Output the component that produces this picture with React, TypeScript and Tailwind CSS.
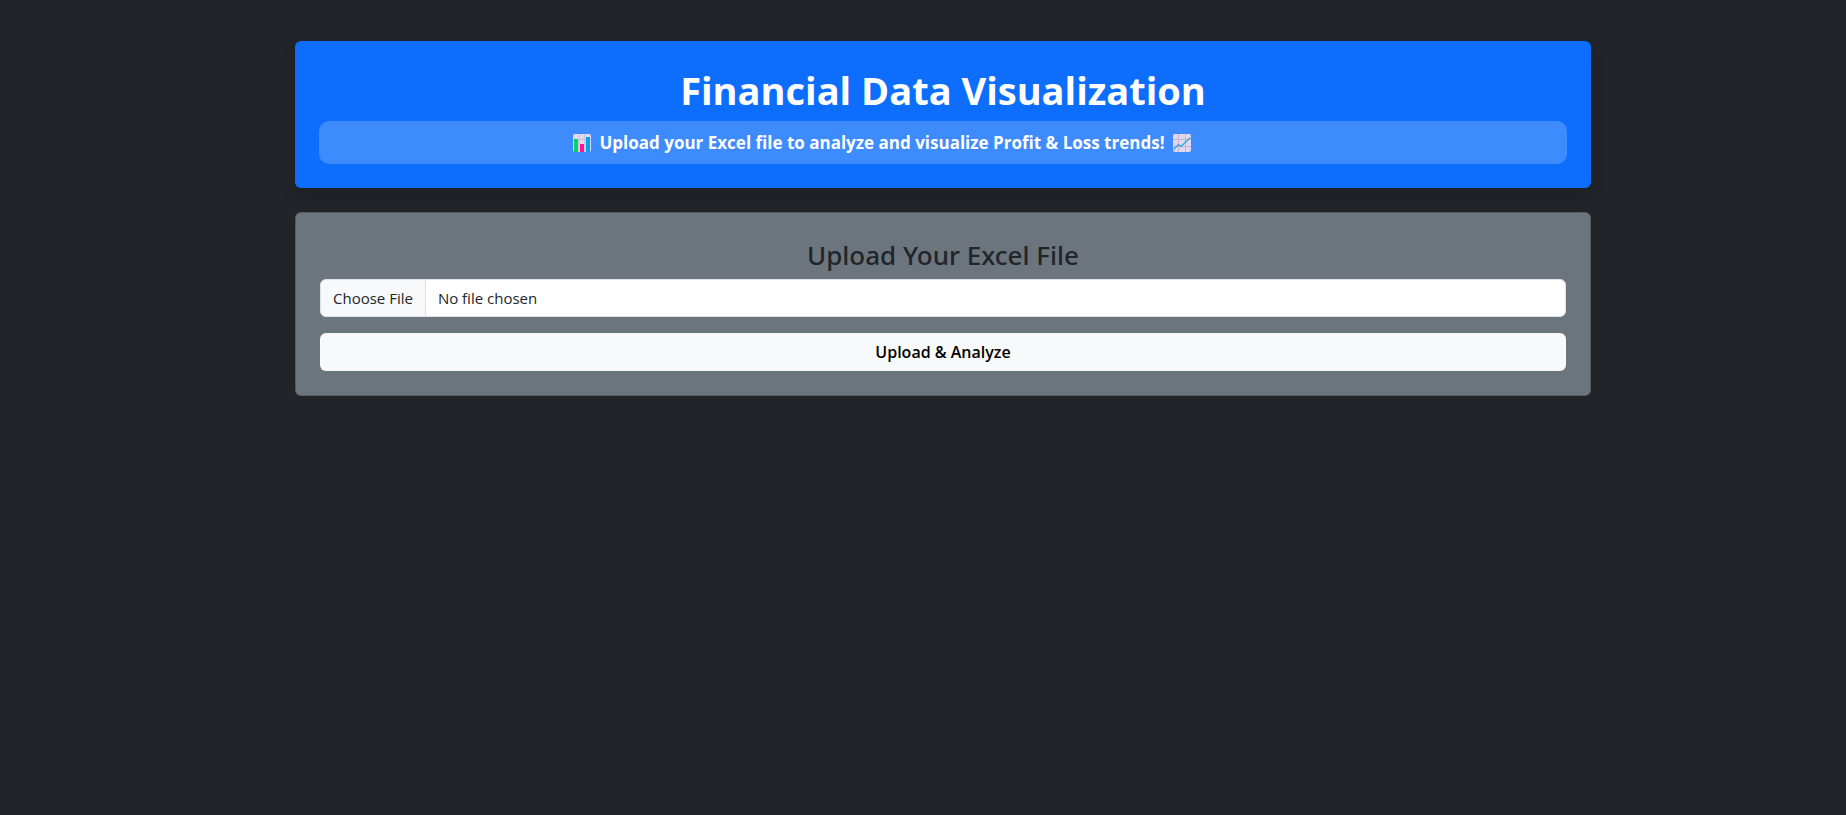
import React from "react";

function BarChartIcon() {
  return (
    <svg width="18" height="18" viewBox="0 0 18 18" aria-hidden="true" className="shrink-0">
      <rect width="18" height="18" rx="2" fill="#e1d8ec" />
      <path d="M0 5.5h18M6 0v18M12 0v18" stroke="#c8bbd6" strokeWidth="1" />
      <rect x="1" y="5" width="4" height="13" fill="#00d26a" />
      <rect x="7" y="10" width="4" height="8" fill="#ff1493" />
      <rect x="13" y="3" width="4" height="15" fill="#00a6ed" />
    </svg>
  );
}

function TrendIcon() {
  return (
    <svg width="18" height="18" viewBox="0 0 18 18" aria-hidden="true" className="shrink-0">
      <rect width="18" height="18" rx="2" fill="#e1d8ec" />
      <path d="M0 5.5h18M0 12.5h18M5.5 0v18M12.5 0v18" stroke="#c3b5d2" strokeWidth="1" />
      <path d="M0.5 15.5L5.5 10.5L8 12.5L17.5 3.5" fill="none" stroke="#26a6e6" strokeWidth="1.3" />
    </svg>
  );
}

export default function App() {
  return (
    <div className="min-h-screen bg-[#212529] py-[41px] pr-4 pl-14 font-['Open_Sans','Noto_Sans',sans-serif] text-base text-[#212529]">
      <main className="mx-auto flex max-w-[1296px] flex-col gap-6">
        <header className="rounded-md bg-[#0d6efd] p-6 text-white shadow-[0_8px_16px_rgba(0,0,0,0.15)]">
          <h1 className="mb-1.5 text-center text-[38px] leading-[50px] font-bold">
            Financial Data Visualization
          </h1>
          <p className="flex items-center justify-center gap-2 rounded-[10px] bg-white/20 py-2 pr-[122px] text-[17px] leading-[27px] font-bold">
            <BarChartIcon />
            <span>Upload your Excel file to analyze and visualize Profit &amp; Loss trends!</span>
            <TrendIcon />
          </p>
        </header>

        <form
          className="rounded-md border border-black/20 bg-[#6c757d] bg-clip-border p-6"
          onSubmit={(event) => event.preventDefault()}
        >
          <h2 className="mb-1.5 text-center font-['Noto_Sans',sans-serif] text-[26px] leading-9 font-medium">
            <label htmlFor="excel-file">Upload Your Excel File</label>
          </h2>
          <input
            id="excel-file"
            type="file"
            accept=".xls,.xlsx"
            className="mb-4 block h-[38px] w-full overflow-hidden rounded-md border border-[#dee2e6] bg-white text-[15px] leading-9 file:mr-3 file:h-9 file:border-0 file:border-r file:border-solid file:border-[#dee2e6] file:bg-[#f8f9fa] file:px-3 file:text-[15px] file:font-normal file:text-[#212529]"
          />
          <button type="submit" className="block h-[38px] w-full rounded-md bg-[#f8f9fa] text-base font-semibold text-black">
            Upload &amp; Analyze
          </button>
        </form>
      </main>
    </div>
  );
}
